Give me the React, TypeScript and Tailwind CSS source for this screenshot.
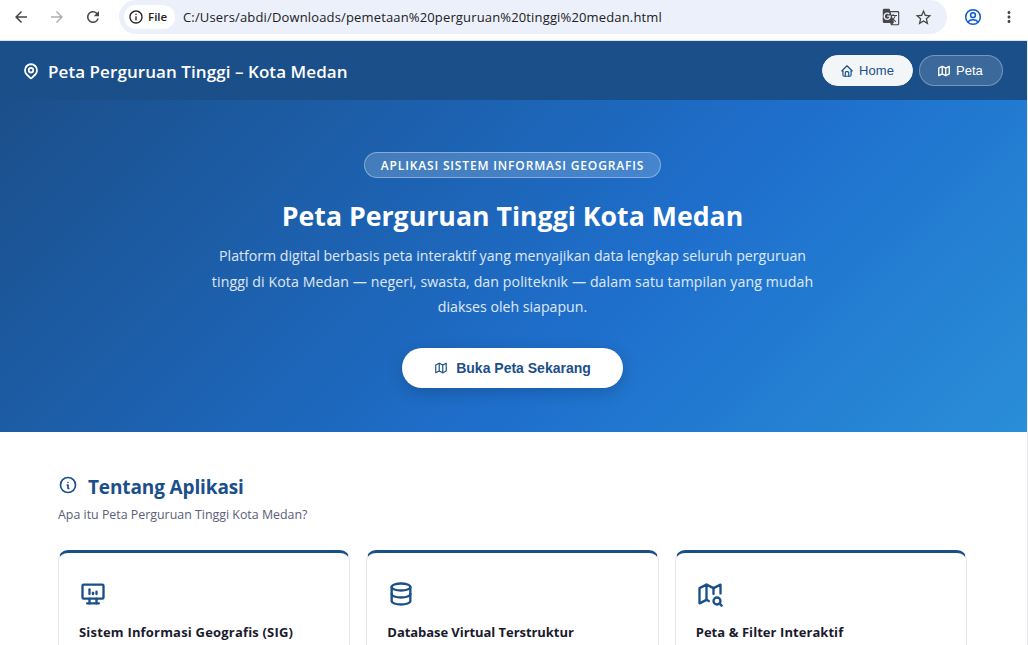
import type { ReactNode } from "react";
import type { IconType } from "react-icons";
import {
  TbDatabase,
  TbDeviceDesktopAnalytics,
  TbHome,
  TbInfoCircle,
  TbMap,
  TbMapPin,
  TbMapSearch,
} from "react-icons/tb";
import {
  MdArrowBack,
  MdArrowForward,
  MdGTranslate,
  MdMoreVert,
  MdOutlineInfo,
  MdRefresh,
  MdStarBorder,
} from "react-icons/md";

const FEATURES: { title: string; icon: IconType; spacing: string }[] = [
  { title: "Sistem Informasi Geografis (SIG)", icon: TbDeviceDesktopAnalytics, spacing: "tracking-[0.19px]" },
  { title: "Database Virtual Terstruktur", icon: TbDatabase, spacing: "tracking-[-0.06px]" },
  { title: "Peta & Filter Interaktif", icon: TbMapSearch, spacing: "tracking-[0.06px]" },
];

function ProfileIcon() {
  return (
    <svg width="18" height="18" viewBox="0 0 18 18" fill="none" stroke="#0b57d0" strokeWidth="1.5">
      <circle cx="9" cy="9" r="7.3" />
      <circle cx="9" cy="7.2" r="2.4" />
      <path d="M3.8 14c1.4-1.500 3.200-2.200 5.200-2.200s3.800.7 5.200 2.200" />
    </svg>
  );
}

function BrowserBar() {
  return (
    <div className="flex h-[41px] items-start border-b border-[#dfe1e4] bg-white text-[#474747]">
      <div className="flex h-[34px] w-[119px] shrink-0 items-center pl-3">
        <MdArrowBack className="size-[18px]" />
        <MdArrowForward className="ml-[18px] size-[18px] text-[#b0b0b0]" />
        <MdRefresh className="ml-[18px] size-[18px]" />
      </div>
      <div className="flex h-[34px] w-[828px] shrink-0 items-center rounded-full bg-[#ecf0fa] pl-[5px] text-[#202124]">
        <div className="flex h-6 w-[51px] items-center rounded-full bg-white pl-1 text-[11.5px] font-semibold">
          <MdOutlineInfo className="mr-1 size-4" />
          File
        </div>
        <span className="ml-2 whitespace-nowrap pt-px text-[13px] tracking-[0.15px]">
          C:/Users/abdi/Downloads/pemetaan%20perguruan%20tinggi%20medan.html
        </span>
        <div className="ml-auto flex items-center gap-[14px] pr-[14px] text-[#474747]">
          <MdGTranslate className="size-[18px]" />
          <MdStarBorder className="size-[19px]" />
        </div>
      </div>
      <div className="flex h-[34px] items-center pl-[17px]">
        <ProfileIcon />
        <MdMoreVert className="ml-[18px] size-[18px]" />
      </div>
    </div>
  );
}

function NavPill({ active = false, children }: { active?: boolean; children: ReactNode }) {
  return (
    <button
      type="button"
      className={`flex h-[31px] items-center gap-[5px] rounded-full border px-[17px] pt-px font-['Liberation_Sans',sans-serif] text-[13px] ${
        active
          ? "w-[91px] border-[#f3f6f9] bg-[#f3f6f9] tracking-[0.1px] text-[#1b4f8a]"
          : "w-[84px] border-white/30 bg-white/15 text-white"
      }`}
    >
      {children}
    </button>
  );
}

function Header() {
  return (
    <header className="flex h-[59px] items-center bg-[#1b4f8a] pl-[22px] pr-[24px] text-white">
      <TbMapPin className="size-[18px] [stroke-width:2.4]" />
      <span className="ml-2 whitespace-nowrap pt-[2px] text-[17px] font-semibold tracking-[0.07px]">
        Peta Perguruan Tinggi – Kota Medan
      </span>
      <nav className="ml-auto flex gap-[6px]">
        <NavPill active>
          <TbHome className="size-[14px]" />
          Home
        </NavPill>
        <NavPill>
          <TbMap className="size-[14px] [stroke-width:2.3]" />
          Peta
        </NavPill>
      </nav>
    </header>
  );
}

function Hero() {
  return (
    <section className="flex h-[332px] flex-col items-center bg-[linear-gradient(135deg,#1b4f8a_0%,#1e6fcc_60%,#2a8ed8_100%)] pt-[52px] pr-[2px] text-white">
      <div className="flex h-[26px] w-[297px] items-center justify-center whitespace-nowrap rounded-full border border-white/35 bg-white/18 pt-px text-[12px] font-semibold tracking-[0.85px]">
        APLIKASI SISTEM INFORMASI GEOGRAFIS
      </div>
      <h1 className="mt-[18px] whitespace-nowrap text-[26.7px] font-bold leading-[40px]">
        Peta Perguruan Tinggi Kota Medan
      </h1>
      <p className="mt-[7px] whitespace-nowrap text-center text-[14.15px] leading-[25.5px] text-white/85">
        Platform digital berbasis peta interaktif yang menyajikan data lengkap seluruh perguruan
        <br />
        <span className="tracking-[0.09px]">
          tinggi di Kota Medan — negeri, swasta, dan politeknik — dalam satu tampilan yang mudah
        </span>
        <br />
        diakses oleh siapapun.
      </p>
      <button
        type="button"
        className="mt-[28px] flex h-10 w-[221px] shrink-0 items-center justify-center gap-2 whitespace-nowrap rounded-full bg-white pt-px font-['Liberation_Sans',sans-serif] text-[14px] font-bold text-[#1b4f8a] shadow-[0_4px_16px_rgba(0,0,0,0.18)]"
      >
        <TbMap className="size-[14px]" />
        Buka Peta Sekarang
      </button>
    </section>
  );
}

function About() {
  return (
    <section className="h-[213px] overflow-hidden pl-[58px] pt-[40px]">
      <div className="flex items-center text-[#1b4f8a]">
        <TbInfoCircle className="mb-1 size-5" />
        <h2 className="ml-[10px] whitespace-nowrap text-[19px] font-bold leading-[30px] tracking-[-0.13px]">
          Tentang Aplikasi
        </h2>
      </div>
      <p className="mt-[3px] text-[12.4px] leading-5 text-[#5a6078]">Apa itu Peta Perguruan Tinggi Kota Medan?</p>
      <div className="mt-[25px] grid w-[909px] grid-cols-3 gap-4">
        {FEATURES.map(({ title, icon: Icon, spacing }) => (
          <article
            key={title}
            className="h-[180px] rounded-[10px] border border-t-[3px] border-[#e4e6e9] border-t-[#1b4f8a] px-5 pt-[27px]"
          >
            <Icon className="size-7 text-[#1b4f8a]" />
            <h3 className={`mt-[14px] whitespace-nowrap text-[13px] font-bold leading-5 text-[#1a1a2e] ${spacing}`}>
              {title}
            </h3>
          </article>
        ))}
      </div>
    </section>
  );
}

export default function App() {
  return (
    <div className="h-[645px] w-[1028px] overflow-hidden bg-white font-['Open_Sans','Noto_Sans',sans-serif]">
      <BrowserBar />
      <main className="border-r border-[#e8eaed]">
        <Header />
        <Hero />
        <About />
      </main>
    </div>
  );
}
